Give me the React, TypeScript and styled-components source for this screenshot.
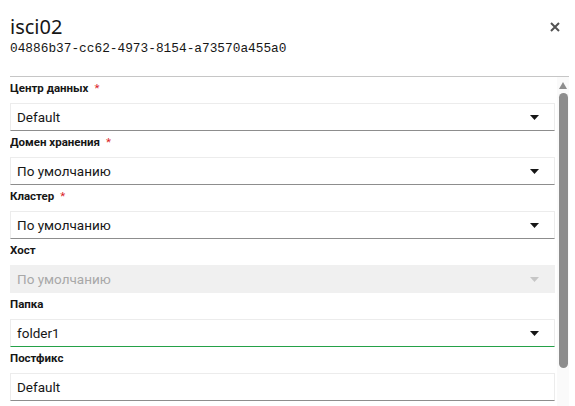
import React from "react";
import styled, { createGlobalStyle } from "styled-components";

const GlobalStyle = createGlobalStyle`
  html, body {
    margin: 0;
    padding: 0;
    background: #fff;
    overflow: hidden;
  }
  body {
    font-family: Roboto, "Noto Sans", sans-serif;
    color: #161616;
  }
`;

const Modal = styled.div`
  width: 575px;
  height: 406px;
  display: flex;
  flex-direction: column;
`;

const Header = styled.div`
  display: flex;
  justify-content: space-between;
  align-items: flex-start;
  padding: 13px 12px 0 10px;
  height: 76px;
  box-sizing: border-box;
  flex-shrink: 0;
`;

const TitleBlock = styled.div`
  display: flex;
  flex-direction: column;
`;

const Title = styled.h2`
  margin: 0;
  font-family: "Noto Sans", sans-serif;
  font-size: 20px;
  font-weight: 400;
  line-height: 28px;
  color: #161616;
`;

const Uuid = styled.div`
  font-family: "Liberation Mono", "DejaVu Sans Mono", monospace;
  font-size: 12.8px;
  line-height: 16px;
  color: #161616;
`;

const CloseButton = styled.button`
  border: none;
  background: none;
  padding: 0;
  margin-top: 6px;
  width: 16px;
  height: 16px;
  display: flex;
  align-items: center;
  justify-content: center;
  cursor: pointer;
`;

const Divider = styled.hr`
  margin: 0 6px 0 10px;
  border: none;
  border-top: 1px solid #c6c6c6;
  flex-shrink: 0;
`;

const Body = styled.div`
  flex: 1;
  min-height: 0;
  display: flex;
  gap: 2px;
  margin-right: 6px;
  padding-left: 10px;
`;

const Form = styled.div`
  flex: 1;
  min-width: 0;
  overflow: hidden;
  display: flex;
  flex-direction: column;
`;

const ScrollRail = styled.div`
  width: 12px;
  flex-shrink: 0;
  background: #fafafa;
  display: flex;
  flex-direction: column;
  align-items: center;
`;

const ScrollArrow = styled.div`
  width: 0;
  height: 0;
  margin-top: 5px;
  border-left: 4.5px solid transparent;
  border-right: 4.5px solid transparent;
  border-bottom: 7px solid #8d8d8d;
`;

const ScrollThumb = styled.div`
  width: 9px;
  height: 275px;
  margin-top: 4px;
  background: #8d8d8d;
  border-radius: 5px;
`;

const Field = styled.div`
  display: flex;
  flex-direction: column;
  padding-top: 3px;
  flex-shrink: 0;
`;

const Label = styled.label`
  font-size: 11.5px;
  font-weight: 700;
  line-height: 16px;
  margin-bottom: 7px;
  color: #161616;
`;

const Required = styled.span`
  color: #da1e28;
  font-weight: 400;
  margin-left: 6px;
`;

const SelectBox = styled.div<{ $disabled?: boolean; $focused?: boolean }>`
  height: 28px;
  box-sizing: border-box;
  display: flex;
  align-items: center;
  justify-content: space-between;
  padding: 0 15px 0 6px;
  background: ${(p) => (p.$disabled ? "#f0f0f0" : "#fff")};
  border: 1px solid ${(p) => (p.$disabled ? "#f0f0f0" : "#ececec")};
  border-bottom: 1px solid
    ${(p) => (p.$disabled ? "#f0f0f0" : p.$focused ? "#24a148" : "#8d8d8d")};
  font-size: 13.5px;
  color: ${(p) => (p.$disabled ? "#a8a8a8" : "#161616")};
`;

const Caret = ({ color }: { color: string }) => (
  <svg width="9" height="5" viewBox="0 0 9 5">
    <path d="M0 0h9L4.5 5z" fill={color} />
  </svg>
);

const fields = [
  { label: "Центр данных", value: "Default", required: true },
  { label: "Домен хранения", value: "По умолчанию", required: true },
  { label: "Кластер", value: "По умолчанию", required: true },
  { label: "Хост", value: "По умолчанию", disabled: true },
  { label: "Папка", value: "folder1", focused: true },
  { label: "Постфикс", value: "Default", text: true },
];

export default function App() {
  return (
    <Modal>
      <GlobalStyle />
      <Header>
        <TitleBlock>
          <Title>isci02</Title>
          <Uuid>04886b37-cc62-4973-8154-a73570a455a0</Uuid>
        </TitleBlock>
        <CloseButton aria-label="Закрыть">
          <svg width="10" height="10" viewBox="0 0 10 10">
            <path d="M1 1l8 8M9 1l-8 8" stroke="#525252" strokeWidth="2" />
          </svg>
        </CloseButton>
      </Header>
      <Divider />
      <Body>
        <Form>
          {fields.map((f) => (
            <Field key={f.label}>
              <Label>
                {f.label}
                {f.required && <Required>*</Required>}
              </Label>
              <SelectBox $disabled={f.disabled} $focused={f.focused}>
                <span>{f.value}</span>
                {!f.text && <Caret color={f.disabled ? "#c6c6c6" : "#161616"} />}
              </SelectBox>
            </Field>
          ))}
        </Form>
        <ScrollRail>
          <ScrollArrow />
          <ScrollThumb />
        </ScrollRail>
      </Body>
    </Modal>
  );
}
